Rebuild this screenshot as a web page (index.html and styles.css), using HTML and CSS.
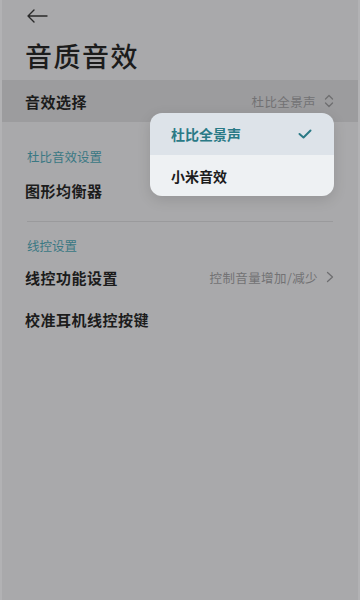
FILE: index.html
```html
<!DOCTYPE html>
<html lang="zh-CN">

<head>
    <meta charset="UTF-8">
    <meta name="viewport" content="width=device-width, initial-scale=1.0">
    <title>音质音效</title>
    <link rel="stylesheet" href="styles.css">
</head>

<body>
    <div class="page">
        <div class="topbar">
            <svg class="back" width="22" height="14" viewBox="0 0 22 14">
                <path d="M21 7H2M8 1L2 7l6 6" fill="none" stroke="#2a2a2a" stroke-width="1.4" stroke-linecap="round" stroke-linejoin="round" />
            </svg>
        </div>
        <h1 class="title">音质音效</h1>

        <div class="row row-active">
            <span class="label">音效选择</span>
            <span class="value">杜比全景声
                <svg class="updown" width="10" height="14" viewBox="0 0 10 14">
                    <path d="M1.5 5L5 1.5 8.5 5M1.5 9L5 12.5 8.5 9" fill="none" stroke="#6e6e70" stroke-width="1.3" stroke-linecap="round" stroke-linejoin="round" />
                </svg>
            </span>
        </div>

        <div class="section-title first">杜比音效设置</div>
        <div class="row tall">
            <span class="label">图形均衡器</span>
        </div>

        <div class="divider"></div>

        <div class="section-title">线控设置</div>
        <div class="row">
            <span class="label">线控功能设置</span>
            <span class="value">控制音量增加/减少
                <svg class="chevron" width="8" height="12" viewBox="0 0 8 12">
                    <path d="M1.5 1.5L6.5 6l-5 4.5" fill="none" stroke="#6e6e70" stroke-width="1.3" stroke-linecap="round" stroke-linejoin="round" />
                </svg>
            </span>
        </div>
        <div class="row">
            <span class="label">校准耳机线控按键</span>
        </div>

        <div class="popup">
            <div class="option selected">
                <span>杜比全景声</span>
                <svg width="14" height="10" viewBox="0 0 14 10">
                    <path d="M1.5 5l4 3.5L12.5 1.5" fill="none" stroke="#2a7a86" stroke-width="2" stroke-linecap="round" stroke-linejoin="round" />
                </svg>
            </div>
            <div class="option">
                <span>小米音效</span>
            </div>
        </div>
    </div>
</body>

</html>
```

FILE: styles.css
```css
html,
body {
    margin: 0;
    padding: 0;
}

body {
    font-family: "Noto Sans CJK SC", "Noto Sans", sans-serif;
    background: #b2b2b4;
}

.page {
    position: relative;
    width: 356px;
    height: 600px;
    margin: 0 2px;
    background: #a9a9ab;
    color: #1c1c1c;
}

.topbar {
    height: 32px;
    display: flex;
    align-items: center;
    padding-left: 24px;
}

.back {
    display: block;
}

.title {
    margin: 0;
    height: 48px;
    line-height: 48px;
    padding-left: 23px;
    font-size: 27px;
    font-weight: 500;
    letter-spacing: 1.5px;
}

.row {
    display: flex;
    justify-content: space-between;
    align-items: center;
    height: 42px;
    padding: 0 24px 0 23px;
}

.row-active {
    background: #9c9c9e;
}

.row.tall {
    height: 46px;
}

.label {
    font-size: 15px;
    font-weight: 700;
    letter-spacing: 0.5px;
}

.value {
    display: flex;
    align-items: center;
    gap: 8px;
    font-size: 12.5px;
    letter-spacing: 0.4px;
    color: #727274;
}

.section-title {
    margin-top: 14px;
    line-height: 20px;
    padding-left: 25px;
    font-size: 12.5px;
    color: #3a7883;
}

.section-title.first {
    margin-top: 25px;
}

.divider {
    height: 1px;
    margin: 8px 25px 0 25px;
    background: #9a9a9c;
}

.popup {
    position: absolute;
    left: 148px;
    top: 113px;
    width: 184px;
    border-radius: 12px;
    overflow: hidden;
    box-shadow: 0 4px 14px rgba(0, 0, 0, 0.12);
}

.option {
    display: flex;
    justify-content: space-between;
    align-items: center;
    height: 41px;
    padding: 0 22px 0 21px;
    background: #eef1f3;
    font-size: 14px;
    font-weight: 700;
    color: #1c1c1c;
}

.option.selected {
    height: 42px;
    background: #dde3e9;
    color: #2a7a86;
}
```
